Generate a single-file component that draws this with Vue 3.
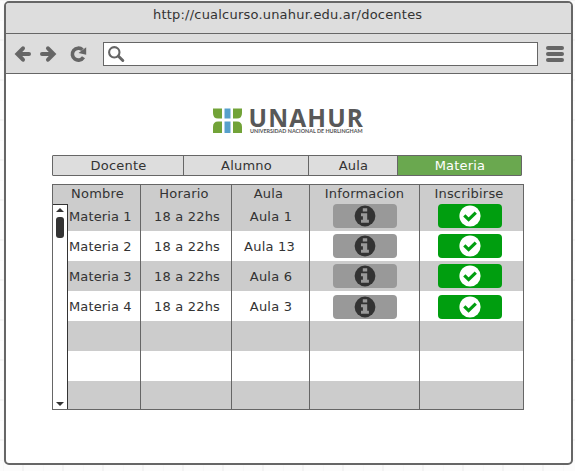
<script setup>
const tabs = ['Docente', 'Alumno', 'Aula', 'Materia']
const headers = ['Nombre', 'Horario', 'Aula', 'Informacion', 'Inscribirse']
const rows = [
  { name: 'Materia 1', time: '18 a 22hs', room: 'Aula 1' },
  { name: 'Materia 2', time: '18 a 22hs', room: 'Aula 13' },
  { name: 'Materia 3', time: '18 a 22hs', room: 'Aula 6' },
  { name: 'Materia 4', time: '18 a 22hs', room: 'Aula 3' },
  {}, {}, {},
]
</script>

<template>
  <div class="canvas">
    <div class="window">
      <div class="title">http://cualcurso.unahur.edu.ar/docentes</div>
      <div class="toolbar">
        <svg class="nav" width="82" height="20" viewBox="0 0 82 20" fill="none" stroke="#666" stroke-width="4">
          <path d="M10 4.300L4.400 10l5.600 5.700M5 10h11" stroke-linecap="round" />
          <path d="M35 4.300l5.600 5.700-5.600 5.700M40 10H29" stroke-linecap="round" />
          <path d="M70.500 13.300a6 6 0 1 1-1-7.500" stroke-width="3.600" />
          <path d="M73.200 3.300v7.500l-7.700-1.800z" fill="#666" stroke="none" />
        </svg>
        <div class="address">
          <svg width="18" height="18" viewBox="0 0 18 18" fill="none" stroke="#666">
            <circle cx="6.300" cy="6.300" r="5.200" stroke-width="2.100" />
            <path d="M10.500 10.300l4.300 4.200" stroke-width="3" stroke-linecap="round" />
          </svg>
        </div>
        <div class="menu"><i></i><i></i><i></i></div>
      </div>
      <main>
        <svg class="logo" width="154" height="30" viewBox="0 0 154 30">
          <g fill="#72a338">
            <path d="M1 2.500h9v10H6Q1 12.500 1 7z" />
            <path d="M21 2.500h9V7q0 5.500-5 5.500h-4z" />
            <path d="M1 27V21q0-5.500 5-5.500h4V27z" />
            <path d="M21 15.500h4q5 0 5 5.500v6h-9z" />
          </g>
          <path d="M12.500 2.500h6v10h-6zM12.500 15.500h6V27h-6z" fill="#57a0cb" />
          <text class="brand" x="36.500" y="20.500" textLength="114.500">UNAHUR</text>
          <text class="sub" x="38" y="27" textLength="112.500" lengthAdjust="spacingAndGlyphs">UNIVERSIDAD NACIONAL DE HURLINGHAM</text>
        </svg>
        <nav class="tabs">
          <div v-for="(t, i) in tabs" :key="t" :class="{ active: i === 3 }">{{ t }}</div>
        </nav>
        <div class="table">
          <div class="row head"><div v-for="h in headers" :key="h">{{ h }}</div></div>
          <div v-for="(r, i) in rows" :key="i" class="row body">
            <div class="name">{{ r.name }}</div>
            <div class="time">{{ r.time }}</div>
            <div class="room">{{ r.room }}</div>
            <div>
              <span v-if="r.name" class="btn info">
                <svg width="22" height="22" viewBox="0 0 22 22">
                  <circle cx="11" cy="11" r="10.400" fill="#333" />
                  <path d="M8.800 3.200h4.400v3.300H8.800zM7 8.300h6.200v6.400h1.700v3H7v-3h1.900v-3.400H7z" fill="#999" />
                </svg>
              </span>
            </div>
            <div class="action">
              <span v-if="r.name" class="btn check">
                <svg width="22" height="22" viewBox="0 0 22 22">
                  <circle cx="11" cy="11" r="10.600" fill="#fff" />
                  <path d="M5.300 10.300l4.300 4.300 7.200-7" fill="none" stroke="#009e0f" stroke-width="3.200" />
                </svg>
              </span>
            </div>
          </div>
          <div class="scroll">
            <svg width="8" height="4" viewBox="0 0 8 4"><path d="M0 4L4 0l4 4z" fill="#333" /></svg>
            <b></b>
            <svg class="down" width="8" height="4" viewBox="0 0 8 4"><path d="M0 0h8L4 4z" fill="#333" /></svg>
          </div>
        </div>
      </main>
    </div>
  </div>
</template>

<style>
body { margin: 0; }
</style>

<style scoped>
* { box-sizing: border-box; }
.canvas {
  width: 575px;
  height: 471px;
  padding: 1px 2px 6px 4px;
  background-color: #fcfcfc;
  background-image:
    linear-gradient(90deg, #f4f4f4 2px, transparent 2px),
    linear-gradient(#f4f4f4 2px, transparent 2px),
    linear-gradient(90deg, #f8f8f8 1px, transparent 1px),
    linear-gradient(#f8f8f8 1px, transparent 1px);
  background-size: 40px 40px;
  background-position: 22px 0, 0 39px, 3px 0, 0 20px;
  font: 13px/20px "DejaVu Sans", Verdana, sans-serif;
  letter-spacing: 0.2px;
  color: #333;
  white-space: nowrap;
}
.window {
  height: 464px;
  border: 2px solid #666;
  border-radius: 5px;
  background: #fff;
  overflow: hidden;
}
.title {
  height: 31px;
  padding-top: 2px;
  padding-left: 147px;
  letter-spacing: 0.21px;
  background: #ddd;
  border-bottom: 1px solid #666;
}
.toolbar {
  height: 40px;
  display: flex;
  align-items: center;
  padding: 0 7px 0 7px;
  background: #ddd;
  border-bottom: 1px solid #666;
}
.nav { flex: none; }
.address {
  width: 435px;
  height: 24px;
  margin-left: 8px;
  padding: 3px 4px;
  border: 1px solid #666;
  background: #fff;
}
.address svg { display: block; }
.menu {
  display: flex;
  flex-direction: column;
  gap: 2px;
  margin-left: 8px;
}
.menu i { width: 18px; height: 4px; border-radius: 2px; background: #666; }
main { padding: 32px 46px 0; }
.logo { display: block; margin-left: 160px; overflow: visible; }
.brand { font: 700 24.5px "Open Sans", sans-serif; fill: #585858; letter-spacing: 0; }
.sub { font: 700 5.5px Lato, sans-serif; fill: #555; letter-spacing: 0; }
.tabs {
  display: grid;
  grid-template-columns: 130px 125px 89px 124px;
  width: 470px;
  height: 21px;
  margin-top: 19px;
  border: 1px solid #666;
  border-radius: 1px;
  background: #ddd;
  text-align: center;
  line-height: 19px;
}
.tabs div { padding-left: 1px; }
.tabs div + div { border-left: 1px solid #666; }
.tabs .active { background: #6aa84f; color: #fff; }
.table {
  position: relative;
  width: 472px;
  height: 226px;
  margin-top: 8px;
  border: 1px solid #666;
  overflow: hidden;
}
.row {
  display: grid;
  grid-template-columns: 87px 91px 78px 110px 104px;
  height: 30px;
  line-height: 31px;
  text-align: center;
}
.row:nth-child(even), .head { background: #ccc; }
.row > div + div { border-left: 1px solid #666; }
.head { height: 16px; line-height: 18px; }
.head > div:first-child { padding-left: 2px; }
.head > div:nth-child(2) { padding-right: 4px; }
.head > div:nth-child(3) { padding-right: 4px; }
.head > div:nth-child(5) { padding-right: 5px; }
.action { padding-right: 4px; }
.row .name { padding-left: 16px; text-align: left; letter-spacing: 0.12px; }
.time { padding-left: 2px; }
.room { padding-left: 1px; }
.row:nth-child(3) .room { padding: 0 2px 0 0; }
.btn {
  display: flex;
  width: 64px;
  height: 24px;
  margin: 3px auto 0;
  align-items: center;
  justify-content: center;
  border-radius: 4px;
}
.row:nth-child(5) .btn { margin-top: 4px; }
.info { background: #999; }
.check { background: #009e0f; }
.scroll {
  position: absolute;
  left: -1px;
  top: 19px;
  width: 16px;
  height: 206px;
  display: flex;
  flex-direction: column;
  align-items: center;
  padding: 3px 0;
  border: 1px solid #333;
  background: #fff;
}
.scroll b { width: 8px; height: 21px; margin-top: 5px; border-radius: 3px; background: #333; }
.down { margin-top: auto; }
</style>
